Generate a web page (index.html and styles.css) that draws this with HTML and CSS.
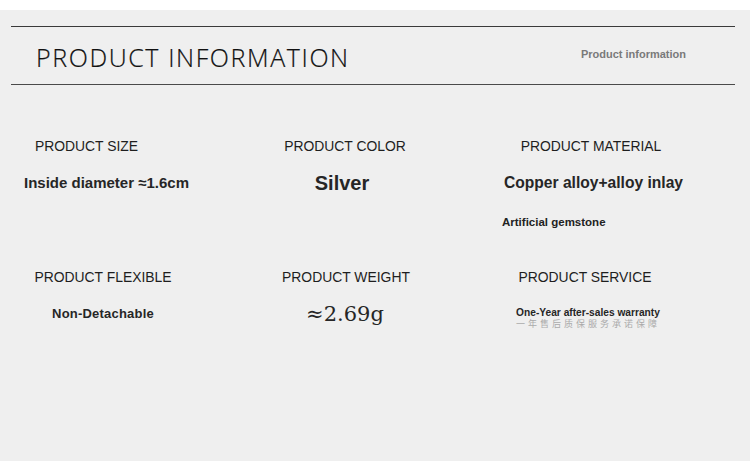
FILE: index.html
```html
<!DOCTYPE html>
<html>
<head>
<meta charset="utf-8">
<link rel="stylesheet" href="styles.css">
</head>
<body>
<div class="sheet">
  <header class="head">
    <h1 class="title">PRODUCT INFORMATION</h1>
    <span class="sub">Product information</span>
  </header>
  <section class="grid">
    <div class="cell">
      <div class="label l-size">PRODUCT SIZE</div>
      <div class="value v-size">Inside diameter ≈1.6cm</div>
    </div>
    <div class="cell">
      <div class="label">PRODUCT COLOR</div>
      <div class="value v-silver">Silver</div>
    </div>
    <div class="cell">
      <div class="label l-mat">PRODUCT MATERIAL</div>
      <div class="value v-mat">Copper alloy+alloy inlay</div>
      <div class="extra">Artificial gemstone</div>
    </div>
    <div class="cell">
      <div class="label">PRODUCT FLEXIBLE</div>
      <div class="value v-small">Non-Detachable</div>
    </div>
    <div class="cell">
      <div class="label l-weight">PRODUCT WEIGHT</div>
      <div class="value v-weight">≈2.69g</div>
    </div>
    <div class="cell">
      <div class="label l-serv">PRODUCT SERVICE</div>
      <div class="value v-service">One-Year after-sales warranty</div>
      <div class="ghost">一年售后质保服务承诺保障</div>
    </div>
  </section>
</div>
</body>
</html>
```
FILE: styles.css
```css
html, body {
  margin: 0;
  padding: 0;
  background: #ffffff;
}
body {
  font-family: "Liberation Sans", Arial, sans-serif;
  color: #222;
}
.sheet {
  margin-top: 10px;
  height: 451px;
  background: #efefef;
  padding: 16px 15px 0 11px;
  box-sizing: border-box;
}
.head {
  border-top: 1.5px solid #3a3a3a;
  border-bottom: 1.5px solid #4a4a4a;
  height: 59px;
  box-sizing: border-box;
  display: flex;
  align-items: center;
  justify-content: space-between;
  padding: 0 49px 0 25px;
}
.title {
  margin: 0;
  font-family: "Open Sans", sans-serif;
  font-weight: 300;
  font-size: 25px;
  letter-spacing: 1.6px;
  color: #111;
  -webkit-text-stroke: 0.2px #111;
  position: relative;
  top: 1px;
}
.sub {
  font-family: "Liberation Sans", Arial, sans-serif;
  font-weight: bold;
  font-size: 11px;
  color: #7a7a7a;
  position: relative;
  top: -2px;
}
.grid {
  display: grid;
  grid-template-columns: 184px 300px 186px;
  grid-template-rows: 131px 80px;
  padding-top: 53px;
}
.cell {
  display: flex;
  flex-direction: column;
  align-items: center;
}
.label {
  font-size: 13.9px;
  line-height: 16px;
  color: #1e1e1e;
  white-space: nowrap;
}
.value {
  font-weight: bold;
  margin-top: 21px;
  color: #262626;
  white-space: nowrap;
}
.l-size { margin-right: 33px; }
.v-size { font-size: 15px; line-height: 16px; margin-left: 7px; }
.v-silver { font-size: 20px; line-height: 16px; margin-top: 21px; margin-right: 6px; }
.l-mat { margin-left: 6px; }
.v-mat { font-size: 15.6px; line-height: 16px; margin-left: 11px; }
.l-weight { margin-left: 2px; }
.l-serv { margin-right: 6px; }
.extra {
  align-self: flex-start;
  margin-left: 7px;
  margin-top: 25px;
  font-weight: bold;
  font-size: 11.5px;
  color: #222;
  white-space: nowrap;
}
.v-small { font-size: 13px; line-height: 14px; margin-top: 22px; letter-spacing: 0.2px; }
.v-weight {
  font-family: "DejaVu Serif", "Liberation Serif", serif;
  font-weight: normal;
  font-size: 21px;
  line-height: 22px;
  margin-top: 18px;
}
.v-service {
  font-size: 10.2px;
  line-height: 11px;
  margin-top: 22px;
}
.ghost {
  font-family: "Noto Sans CJK SC", sans-serif;
  font-size: 9px;
  line-height: 9px;
  color: #9a9a9a;
  letter-spacing: 3px;
  margin-top: 1px;
  opacity: 0.8;
  white-space: nowrap;
}
```
